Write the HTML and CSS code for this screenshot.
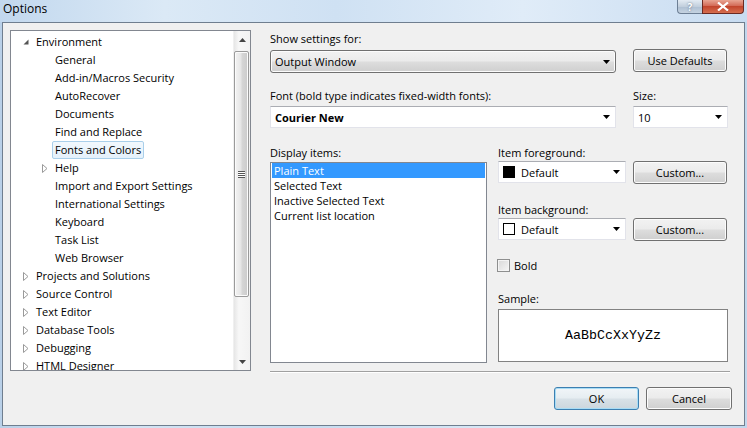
FILE: index.html
```html
<!DOCTYPE html>
<html>
<head>
<meta charset="utf-8">
<title>Options</title>
<link rel="stylesheet" href="styles.css">
</head>
<body>
<div class="window">
  <div class="titlebar">
    <span class="title">Options</span>
    <div class="caption-btns">
      <div class="cbtn help">?</div>
      <div class="cbtn close">
        <svg width="12" height="9" viewBox="0 0 12 9"><path d="M1 0.5 L11 8.5 M11 0.5 L1 8.5" stroke="#fff" stroke-width="2.2"/></svg>
      </div>
    </div>
  </div>
  <div class="client">
    <div class="tree">
      <div class="tree-items">
        <div class="node l0"><span class="exp"><svg width="6" height="6" viewBox="0 0 6 6"><polygon points="5.5,0.5 5.5,5.5 0.5,5.5" fill="#555"/></svg></span><span class="lbl">Environment</span></div>
        <div class="node l1"><span class="exp"></span><span class="lbl">General</span></div>
        <div class="node l1"><span class="exp"></span><span class="lbl">Add-in/Macros Security</span></div>
        <div class="node l1"><span class="exp"></span><span class="lbl">AutoRecover</span></div>
        <div class="node l1"><span class="exp"></span><span class="lbl">Documents</span></div>
        <div class="node l1"><span class="exp"></span><span class="lbl">Find and Replace</span></div>
        <div class="node l1"><span class="exp"></span><span class="lbl sel">Fonts and Colors</span></div>
        <div class="node l1"><span class="exp"><svg width="6" height="9" viewBox="0 0 6 9"><polygon points="0.5,0.5 5,4.5 0.5,8.5" fill="none" stroke="#9a9a9a"/></svg></span><span class="lbl">Help</span></div>
        <div class="node l1"><span class="exp"></span><span class="lbl">Import and Export Settings</span></div>
        <div class="node l1"><span class="exp"></span><span class="lbl">International Settings</span></div>
        <div class="node l1"><span class="exp"></span><span class="lbl">Keyboard</span></div>
        <div class="node l1"><span class="exp"></span><span class="lbl">Task List</span></div>
        <div class="node l1"><span class="exp"></span><span class="lbl">Web Browser</span></div>
        <div class="node l0"><span class="exp"><svg width="6" height="9" viewBox="0 0 6 9"><polygon points="0.5,0.5 5,4.5 0.5,8.5" fill="none" stroke="#9a9a9a"/></svg></span><span class="lbl">Projects and Solutions</span></div>
        <div class="node l0"><span class="exp"><svg width="6" height="9" viewBox="0 0 6 9"><polygon points="0.5,0.5 5,4.5 0.5,8.5" fill="none" stroke="#9a9a9a"/></svg></span><span class="lbl">Source Control</span></div>
        <div class="node l0"><span class="exp"><svg width="6" height="9" viewBox="0 0 6 9"><polygon points="0.5,0.5 5,4.5 0.5,8.5" fill="none" stroke="#9a9a9a"/></svg></span><span class="lbl">Text Editor</span></div>
        <div class="node l0"><span class="exp"><svg width="6" height="9" viewBox="0 0 6 9"><polygon points="0.5,0.5 5,4.5 0.5,8.5" fill="none" stroke="#9a9a9a"/></svg></span><span class="lbl">Database Tools</span></div>
        <div class="node l0"><span class="exp"><svg width="6" height="9" viewBox="0 0 6 9"><polygon points="0.5,0.5 5,4.5 0.5,8.5" fill="none" stroke="#9a9a9a"/></svg></span><span class="lbl">Debugging</span></div>
        <div class="node l0"><span class="exp"><svg width="6" height="9" viewBox="0 0 6 9"><polygon points="0.5,0.5 5,4.5 0.5,8.5" fill="none" stroke="#9a9a9a"/></svg></span><span class="lbl">HTML Designer</span></div>
      </div>
      <div class="vscroll">
        <div class="sbtn"><svg width="7" height="4" viewBox="0 0 7 4"><polygon points="3.5,0 7,4 0,4" fill="#444"/></svg></div>
        <div class="thumb"><span class="grip"></span></div>
        <div class="track"></div>
        <div class="sbtn"><svg width="7" height="4" viewBox="0 0 7 4"><polygon points="0,0 7,0 3.5,4" fill="#444"/></svg></div>
      </div>
    </div>

    <div class="panel">
      <div class="label first">Show settings for:</div>
      <div class="row r1">
        <div class="combo ro wide"><span class="ctext">Output Window</span><svg class="arrow" width="7" height="4" viewBox="0 0 7 4"><polygon points="0,0 7,0 3.5,4" fill="#000"/></svg></div>
        <div class="btn usedef">Use Defaults</div>
      </div>
      <div class="row labels">
        <div class="label fontlbl">Font (bold type indicates fixed-width fonts):</div>
        <div class="label">Size:</div>
      </div>
      <div class="row r3">
        <div class="combo ed wide"><span class="ctext bold">Courier New</span><svg class="arrow" width="7" height="4" viewBox="0 0 7 4"><polygon points="0,0 7,0 3.5,4" fill="#000"/></svg></div>
        <div class="combo ed size"><span class="ctext">10</span><svg class="arrow" width="7" height="4" viewBox="0 0 7 4"><polygon points="0,0 7,0 3.5,4" fill="#000"/></svg></div>
      </div>

      <div class="display">
        <div class="dcol">
          <div class="label">Display items:</div>
          <div class="listbox">
            <div class="li selected">Plain Text</div>
            <div class="li">Selected Text</div>
            <div class="li">Inactive Selected Text</div>
            <div class="li">Current list location</div>
          </div>
        </div>
        <div class="rcol">
          <div class="label">Item foreground:</div>
          <div class="row colorrow">
            <div class="combo ed color"><span class="swatch black"></span><span class="ctext">Default</span><svg class="arrow" width="7" height="4" viewBox="0 0 7 4"><polygon points="0,0 7,0 3.5,4" fill="#000"/></svg></div>
            <div class="btn custom">Custom...</div>
          </div>
          <div class="label gap18">Item background:</div>
          <div class="row colorrow">
            <div class="combo ed color"><span class="swatch white"></span><span class="ctext">Default</span><svg class="arrow" width="7" height="4" viewBox="0 0 7 4"><polygon points="0,0 7,0 3.5,4" fill="#000"/></svg></div>
            <div class="btn custom">Custom...</div>
          </div>
          <div class="checkrow">
            <span class="checkbox"></span><span>Bold</span>
          </div>
          <div class="label gap18">Sample:</div>
          <div class="sample">AaBbCcXxYyZz</div>
        </div>
      </div>

      <div class="separator"></div>
      <div class="buttons">
        <div class="btn dlg default">OK</div>
        <div class="btn dlg cancel">Cancel</div>
      </div>
    </div>
  </div>
</div>
</body>
</html>
```

FILE: styles.css
```css
* { box-sizing: border-box; }
html, body { margin: 0; padding: 0; }
body {
  width: 747px;
  height: 428px;
  overflow: hidden;
  font-family: "Open Sans", "Noto Sans", sans-serif;
  font-size: 11px;
  color: #000;
}
.window {
  width: 747px;
  height: 428px;
  display: flex;
  flex-direction: column;
  background: linear-gradient(to right, #b9d0e8 0%, #d3e3f3 18%, #c6dbef 40%, #d9e8f6 68%, #c1d7ed 100%);
}
.titlebar {
  height: 22px;
  flex: none;
  display: flex;
  align-items: flex-start;
  justify-content: space-between;
  background: linear-gradient(to right, #c2d8ee 0%, #dbe9f6 22%, #cfe1f3 45%, #e0ecf8 70%, #c8dcf1 100%);
}
.title {
  font-size: 12px;
  line-height: 18px;
  padding-left: 3px;
  color: #000;
}
.caption-btns {
  display: flex;
  margin-right: 3px;
}
.cbtn {
  height: 14px;
  display: flex;
  align-items: center;
  justify-content: center;
  border: 1px solid #6d7f95;
  border-top: none;
}
.help {
  width: 25px;
  border-radius: 0 0 0 4px;
  border-right: none;
  background: linear-gradient(#e3ebf3, #c2cfdd 50%, #aebfd2 51%, #c5d3e1);
  color: #fff;
  font-size: 10px;
  font-weight: bold;
  line-height: 12px;
  text-shadow: 0 0 2px #55667a;
}
.close {
  width: 42px;
  border-radius: 0 0 4px 0;
  border-color: #6b2a22;
  background: linear-gradient(#e8a593, #d36a56 45%, #c2452d 50%, #d66f4f 100%);
}
.client {
  flex: 1;
  margin: 0 2px 2px 2px;
  border: 1px solid #6f7e8f;
  background: #f0f0f0;
  display: flex;
  align-items: flex-start;
  padding: 7px 0 0 7px;
}

/* Tree */
.tree {
  width: 241px;
  height: 341px;
  border: 1px solid #828790;
  background: #fff;
  display: flex;
  flex: none;
}
.tree-items {
  flex: 1;
  padding-top: 2px;
  overflow: hidden;
}
.node {
  height: 18px;
  display: flex;
  align-items: center;
  white-space: nowrap;
}
.node.l0 { padding-left: 8px; }
.node.l1 { padding-left: 27px; }
.exp {
  width: 17px;
  display: flex;
  align-items: center;
  padding-left: 4px;
  flex: none;
}
.lbl {
  height: 18px;
  line-height: 16px;
  margin-left: -3px;
  padding: 0 2px;
  border: 1px solid transparent;
  border-radius: 2px;
}
.lbl.sel {
  border-color: #a9cfea;
  background: linear-gradient(#f2f8fd, #e4f1fb);
}
.vscroll {
  width: 17px;
  display: flex;
  flex-direction: column;
  background: linear-gradient(to right, #e6e6e6, #f7f7f7 30%, #f2f2f2);
  border-left: 1px solid #f0f0f0;
}
.sbtn {
  height: 17px;
  display: flex;
  align-items: center;
  justify-content: center;
  flex: none;
}
.thumb {
  margin: 3px 1px 0 0;
  height: 246px;
  border: 1px solid #9a9a9a;
  border-radius: 2px;
  background: linear-gradient(to right, #f3f3f3, #e6e6e6 45%, #d6d6d6 55%, #cbcbcb);
  box-shadow: inset 0 0 0 1px #fbfbfb;
  display: flex;
  align-items: center;
  justify-content: center;
}
.grip {
  width: 7px;
  height: 7px;
  background: repeating-linear-gradient(#555 0 1px, #fff 1px 2px);
}
.track { flex: 1; }

/* Panel */
.panel {
  margin-left: 19px;
  width: 460px;
  display: flex;
  flex-direction: column;
}
.label {
  line-height: 15px;
  height: 15px;
  white-space: nowrap;
}
.label.first { margin-top: 1px; }
.row {
  display: flex;
  align-items: flex-start;
}
.r1 { margin-top: 4px; }
.labels { margin-top: 15px; }
.fontlbl { width: 363px; }
.r3 { margin-top: 3px; }

.combo {
  position: relative;
  display: flex;
  align-items: center;
  padding-left: 4px;
  white-space: nowrap;
}
.combo .arrow {
  position: absolute;
  right: 5px;
  top: 50%;
  margin-top: -2px;
}
.combo.ro {
  height: 23px;
  border: 1px solid #707070;
  border-radius: 3px;
  background: linear-gradient(#f2f2f2 0%, #ebebeb 48%, #dddddd 52%, #cfcfcf 100%);
  box-shadow: inset 0 0 0 1px #fcfcfc;
}
.combo.ed {
  height: 22px;
  background: #fff;
  border: 1px solid #e2e3ea;
  border-top-color: #abadb3;
}
.combo.wide { width: 346px; }
.combo.size { width: 95px; margin-left: 17px; }
.ctext { line-height: 15px; }
.bold { font-weight: bold; }

.btn {
  height: 23px;
  display: flex;
  align-items: center;
  justify-content: center;
  border: 1px solid #707070;
  border-radius: 3px;
  background: linear-gradient(#f2f2f2 0%, #ebebeb 48%, #dddddd 52%, #cfcfcf 100%);
  box-shadow: inset 0 0 0 1px #fcfcfc;
  white-space: nowrap;
}
.usedef {
  width: 94px;
  margin-left: 17px;
  margin-top: -1px;
}

/* Display section */
.display {
  display: flex;
  margin-top: 17px;
}
.dcol {
  width: 217px;
  display: flex;
  flex-direction: column;
}
.listbox {
  margin-top: 2px;
  height: 201px;
  border: 1px solid #828790;
  background: #fff;
  padding: 0 1px;
}
.li {
  height: 15px;
  line-height: 15px;
  padding-left: 2px;
  white-space: nowrap;
}
.li.selected {
  background: #3399ff;
  color: #fff;
}
.rcol {
  width: 230px;
  margin-left: 11px;
  display: flex;
  flex-direction: column;
}
.colorrow { margin-top: 1px; }
.combo.color { width: 128px; padding-left: 4px; }
.swatch {
  width: 12px;
  height: 12px;
  border: 1px solid #000;
  margin-right: 6px;
  flex: none;
}
.swatch.black { background: #000; }
.swatch.white { background: #fff; }
.custom { width: 94px; margin-left: 7px; }
.gap18 { margin-top: 18px; }
.checkrow {
  margin-top: 17px;
  height: 15px;
  display: flex;
  align-items: center;
  margin-left: -1px;
}
.checkbox {
  width: 13px;
  height: 13px;
  border: 1px solid #8e8f8f;
  background: linear-gradient(135deg, #d8d8d8, #f6f6f6);
  box-shadow: inset 0 0 0 1px #f4f4f4;
  margin-right: 4px;
}
.sample {
  margin-top: 3px;
  height: 53px;
  border: 1px solid #828282;
  background: #fff;
  display: flex;
  align-items: center;
  justify-content: center;
  font-family: "Liberation Mono", "Courier New", monospace;
  font-size: 13.33px;
}

.separator {
  margin-top: 8px;
  height: 1px;
  background: #a0a0a0;
  box-shadow: 0 1px 0 #fff;
}
.buttons {
  margin-top: 15px;
  margin-right: -2px;
  display: flex;
  justify-content: flex-end;
}
.dlg { width: 85px; }
.cancel { width: 86px; margin-left: 7px; }
.default {
  border-color: #3c7fb1;
  box-shadow: inset 0 0 0 1px #a8dcf5;
  background: linear-gradient(#f1f5f8 0%, #e6edf1 48%, #d8e1e7 52%, #ccd6dd 100%);
}
```
